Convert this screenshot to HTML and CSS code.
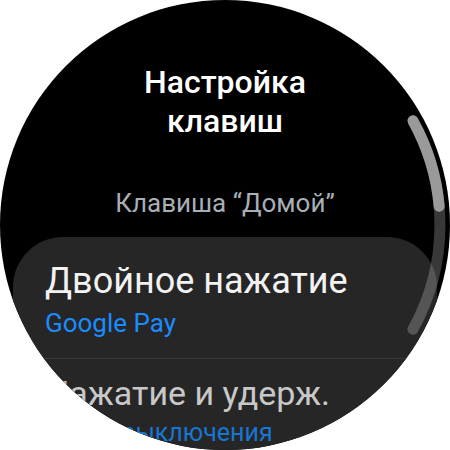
FILE: index.html
```html
<!DOCTYPE html>
<html lang="ru">
<head>
    <meta charset="UTF-8">
    <meta name="viewport" content="width=device-width, initial-scale=1.0">
    <title>Настройка клавиш</title>
    <link rel="stylesheet" href="styles.css">
</head>
<body>
    <div class="watch">
  <h1 class="title">Настройка<br>клавиш</h1>
  <div class="section-label">Клавиша “Домой”</div>
  <div class="card">
    <div class="item">
      <div class="item-title">Двойное нажатие</div>
      <div class="item-value">Google Pay</div>
    </div>
    <div class="divider"></div>
    <div class="item item-far">
      <div class="item-title">Нажатие и удерж.</div>
      <div class="item-value">Меню выключения</div>
    </div>
  </div>
  <svg class="scrollbar" width="450" height="450" viewBox="0 0 450 450">
    <path class="track" d="M413 120.8 A215 215 0 0 1 413 329.2"/>
    <path class="thumb" d="M413 120.8 A215 215 0 0 1 439.2 206.3"/>
  </svg>
</div>
</body>
</html>
```

FILE: styles.css
```css
* {
  box-sizing: border-box;
}
body {
  margin: 0;
  background: white;
  font-family: Roboto, "Noto Sans", sans-serif;
}
div.watch {
  position: relative;
  width: 450px;
  height: 450px;
  border-radius: 50%;
  background: black;
  overflow: hidden;
  padding-top: 63px;
}
h1.title {
  margin: 0;
  font-size: 32px;
  font-weight: 500;
  line-height: 39px;
  color: white;
  text-align: center;
}
.section-label {
  margin-top: 47px;
  font-size: 26px;
  line-height: 30px;
  color: #a8afb6;
  text-align: center;
}
div.card {
  margin: 19px 13px 0;
  padding: 23px 32px 0;
  background-color: #262626;
  border-radius: 50px 50px 0 0;
  height: 300px;
}
.item-title {
  font-size: 36px;
  line-height: 42px;
  color: #f2f2f2;
  white-space: nowrap;
}
.item-value {
  font-size: 26px;
  line-height: 42px;
  color: #1a8cff;
  white-space: nowrap;
}
.divider {
  height: 1px;
  margin-top: 14px;
  background-color: #3a3a3a;
}
.item-far {
  padding-top: 14px;
}
.item-far .item-title {
  font-size: 34px;
  line-height: 40px;
  color: #c8c8c8;
}
.item-far .item-value {
  font-size: 25px;
  line-height: 40px;
  color: #1876d2;
}
svg.scrollbar {
  position: absolute;
  left: 0;
  top: 0;
  fill: none;
  stroke-width: 11;
  stroke-linecap: round;
}
.track {
  stroke: rgba(255, 255, 255, 0.22);
}
.thumb {
  stroke: #9a9a9a;
}
```
